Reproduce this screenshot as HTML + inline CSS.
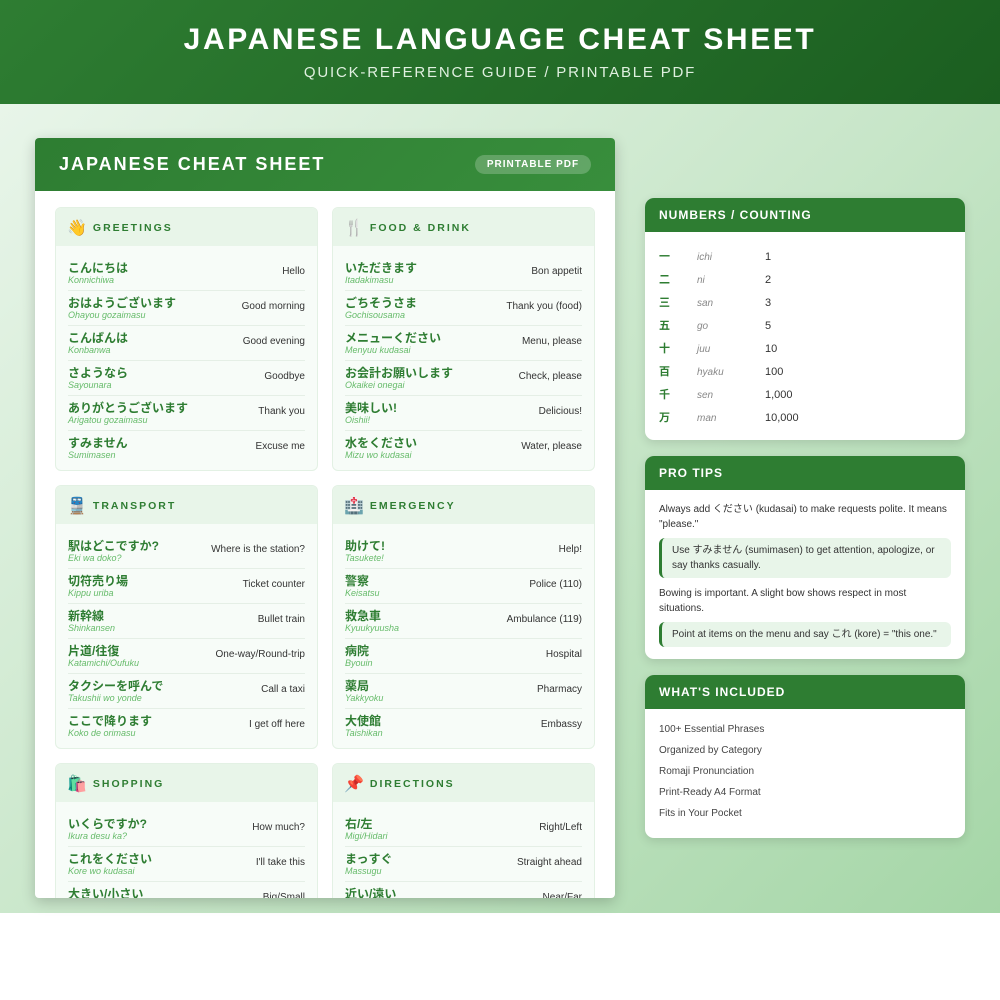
<!DOCTYPE html>
<html><head><meta charset="utf-8"><style>
*{margin:0;padding:0;box-sizing:border-box}
body{width:1000px;height:1000px;background:#fff;font-family:"Liberation Sans","Noto Sans CJK JP",sans-serif;position:relative;overflow:hidden}
.top{position:absolute;left:0;top:0;width:1000px;height:104px;background:linear-gradient(135deg,#2e7d32,#1b5e20);color:#fff;text-align:center}
.top h1{position:absolute;top:23px;left:0;right:0;font-size:30px;letter-spacing:2.6px;font-weight:bold}
.top p{position:absolute;top:64px;left:0;right:0;font-size:15px;letter-spacing:1.8px;color:#e0f0e0}
.bg{position:absolute;left:0;top:104px;width:1000px;height:809px;background:linear-gradient(135deg,#e8f5e9 0%,#c8e6c9 50%,#a5d6a7 100%)}
.card{position:absolute;left:35px;top:138px;width:580px;height:760px;background:#fff;border-radius:4px;overflow:hidden;box-shadow:0 4px 14px rgba(0,0,0,.2)}
.ch{height:53px;background:linear-gradient(135deg,#2e7d32,#388e3c);position:relative;color:#fff}
.ch h2{position:absolute;left:24px;top:16px;font-size:18px;letter-spacing:2px;font-weight:bold}
.badge{position:absolute;left:440px;top:17px;width:116px;height:19px;border-radius:10px;background:rgba(255,255,255,.22);font-size:10px;font-weight:bold;letter-spacing:1px;text-align:center;line-height:19px}
.sec{position:absolute;width:263px;height:264px;background:#f7fcf8;border:1px solid #e3f1e4;border-radius:6px;overflow:hidden}
.sh{height:38px;background:#e8f5e9;padding-left:11px;font-size:10.5px;font-weight:bold;letter-spacing:2px;color:#2e7d32;line-height:40px}
.sh span{font-size:16px;margin-right:6px;letter-spacing:0;vertical-align:-2px}
.rows{padding:10px 12px 0}
.r{height:35px;border-bottom:1px solid #e5efe6;position:relative}
.r:last-child{border-bottom:none}
.j{position:absolute;left:0;top:3px;font-size:12px;font-weight:bold;color:#2e7d32}
.ro{position:absolute;left:0;top:19px;font-size:9px;font-style:italic;color:#66bb6a}
.e{position:absolute;right:0;top:10px;font-size:10px;color:#333}
.side{position:absolute;left:645px;width:320px;background:#fff;border-radius:9px;overflow:hidden;box-shadow:0 3px 10px rgba(0,0,0,.12)}
.sd{height:34px;background:#2e7d32;color:#fff;font-size:12px;font-weight:bold;letter-spacing:1px;padding-left:14px;line-height:34px}
.num{position:relative;height:23px;line-height:23px;font-size:11px}
.num b{position:absolute;left:14px;top:0;color:#2e7d32;font-size:11px}
.num i{position:absolute;left:52px;top:0;color:#888;font-size:10px}
.num span{position:absolute;left:120px;top:0;color:#333}
.tips{padding:12px 14px;font-size:10px;color:#333;line-height:15px}
.tip{background:#e8f5e9;border-left:3px solid #2e7d32;border-radius:6px;padding:5px 10px;margin:6px 0 8px}
.inc .it{font-size:10px;color:#444;height:21px}
</style></head><body>
<div class="top"><h1>JAPANESE LANGUAGE CHEAT SHEET</h1><p>QUICK-REFERENCE GUIDE / PRINTABLE PDF</p></div>
<div class="bg"></div>
<div class="card">
<div class="ch"><h2>JAPANESE CHEAT SHEET</h2><div class="badge">PRINTABLE PDF</div></div>

<div class="sec" style="left:20px;top:69px"><div class="sh"><span>👋</span>GREETINGS</div><div class="rows">
<div class="r"><div class="j">こんにちは</div><div class="ro">Konnichiwa</div><div class="e">Hello</div></div>
<div class="r"><div class="j">おはようございます</div><div class="ro">Ohayou gozaimasu</div><div class="e">Good morning</div></div>
<div class="r"><div class="j">こんばんは</div><div class="ro">Konbanwa</div><div class="e">Good evening</div></div>
<div class="r"><div class="j">さようなら</div><div class="ro">Sayounara</div><div class="e">Goodbye</div></div>
<div class="r"><div class="j">ありがとうございます</div><div class="ro">Arigatou gozaimasu</div><div class="e">Thank you</div></div>
<div class="r"><div class="j">すみません</div><div class="ro">Sumimasen</div><div class="e">Excuse me</div></div>
</div></div>

<div class="sec" style="left:297px;top:69px"><div class="sh"><span>🍴</span>FOOD &amp; DRINK</div><div class="rows">
<div class="r"><div class="j">いただきます</div><div class="ro">Itadakimasu</div><div class="e">Bon appetit</div></div>
<div class="r"><div class="j">ごちそうさま</div><div class="ro">Gochisousama</div><div class="e">Thank you (food)</div></div>
<div class="r"><div class="j">メニューください</div><div class="ro">Menyuu kudasai</div><div class="e">Menu, please</div></div>
<div class="r"><div class="j">お会計お願いします</div><div class="ro">Okaikei onegai</div><div class="e">Check, please</div></div>
<div class="r"><div class="j">美味しい!</div><div class="ro">Oishii!</div><div class="e">Delicious!</div></div>
<div class="r"><div class="j">水をください</div><div class="ro">Mizu wo kudasai</div><div class="e">Water, please</div></div>
</div></div>

<div class="sec" style="left:20px;top:347px"><div class="sh"><span>🚆</span>TRANSPORT</div><div class="rows">
<div class="r"><div class="j">駅はどこですか?</div><div class="ro">Eki wa doko?</div><div class="e">Where is the station?</div></div>
<div class="r"><div class="j">切符売り場</div><div class="ro">Kippu uriba</div><div class="e">Ticket counter</div></div>
<div class="r"><div class="j">新幹線</div><div class="ro">Shinkansen</div><div class="e">Bullet train</div></div>
<div class="r"><div class="j">片道/往復</div><div class="ro">Katamichi/Oufuku</div><div class="e">One-way/Round-trip</div></div>
<div class="r"><div class="j">タクシーを呼んで</div><div class="ro">Takushii wo yonde</div><div class="e">Call a taxi</div></div>
<div class="r"><div class="j">ここで降ります</div><div class="ro">Koko de orimasu</div><div class="e">I get off here</div></div>
</div></div>

<div class="sec" style="left:297px;top:347px"><div class="sh"><span>🏥</span>EMERGENCY</div><div class="rows">
<div class="r"><div class="j">助けて!</div><div class="ro">Tasukete!</div><div class="e">Help!</div></div>
<div class="r"><div class="j">警察</div><div class="ro">Keisatsu</div><div class="e">Police (110)</div></div>
<div class="r"><div class="j">救急車</div><div class="ro">Kyuukyuusha</div><div class="e">Ambulance (119)</div></div>
<div class="r"><div class="j">病院</div><div class="ro">Byouin</div><div class="e">Hospital</div></div>
<div class="r"><div class="j">薬局</div><div class="ro">Yakkyoku</div><div class="e">Pharmacy</div></div>
<div class="r"><div class="j">大使館</div><div class="ro">Taishikan</div><div class="e">Embassy</div></div>
</div></div>

<div class="sec" style="left:20px;top:625px"><div class="sh"><span>🛍️</span>SHOPPING</div><div class="rows">
<div class="r"><div class="j">いくらですか?</div><div class="ro">Ikura desu ka?</div><div class="e">How much?</div></div>
<div class="r"><div class="j">これをください</div><div class="ro">Kore wo kudasai</div><div class="e">I'll take this</div></div>
<div class="r"><div class="j">大きい/小さい</div><div class="ro">Ookii/Chiisai</div><div class="e">Big/Small</div></div>
</div></div>

<div class="sec" style="left:297px;top:625px"><div class="sh"><span>📌</span>DIRECTIONS</div><div class="rows">
<div class="r"><div class="j">右/左</div><div class="ro">Migi/Hidari</div><div class="e">Right/Left</div></div>
<div class="r"><div class="j">まっすぐ</div><div class="ro">Massugu</div><div class="e">Straight ahead</div></div>
<div class="r"><div class="j">近い/遠い</div><div class="ro">Chikai/Tooi</div><div class="e">Near/Far</div></div>
</div></div>
</div>

<div class="side" style="top:198px;height:242px"><div class="sd">NUMBERS / COUNTING</div>
<div style="padding-top:14px">
<div class="num"><b>一</b><i>ichi</i><span>1</span></div>
<div class="num"><b>二</b><i>ni</i><span>2</span></div>
<div class="num"><b>三</b><i>san</i><span>3</span></div>
<div class="num"><b>五</b><i>go</i><span>5</span></div>
<div class="num"><b>十</b><i>juu</i><span>10</span></div>
<div class="num"><b>百</b><i>hyaku</i><span>100</span></div>
<div class="num"><b>千</b><i>sen</i><span>1,000</span></div>
<div class="num"><b>万</b><i>man</i><span>10,000</span></div>
</div></div>

<div class="side" style="top:456px;height:203px"><div class="sd">PRO TIPS</div>
<div class="tips">
<div>Always add ください (kudasai) to make requests polite. It means "please."</div>
<div class="tip">Use すみません (sumimasen) to get attention, apologize, or say thanks casually.</div>
<div>Bowing is important. A slight bow shows respect in most situations.</div>
<div class="tip">Point at items on the menu and say これ (kore) = "this one."</div>
</div></div>

<div class="side inc" style="top:675px;height:163px"><div class="sd">WHAT'S INCLUDED</div>
<div style="padding:15px 14px 0">
<div class="it">100+ Essential Phrases</div><div class="it">Organized by Category</div><div class="it">Romaji Pronunciation</div><div class="it">Print-Ready A4 Format</div><div class="it">Fits in Your Pocket</div>
</div></div>
</body></html>
